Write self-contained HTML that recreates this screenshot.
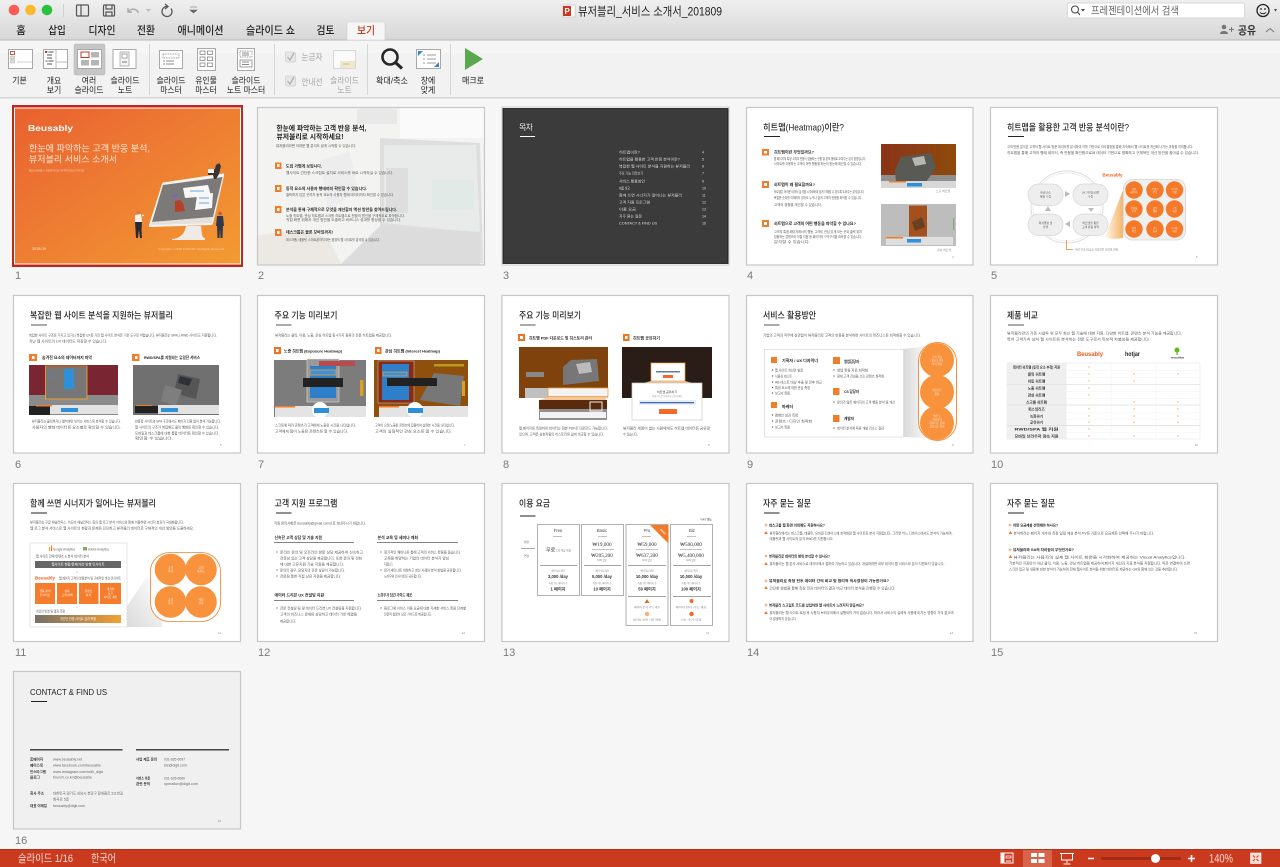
<!DOCTYPE html>
<html lang="ko"><head><meta charset="utf-8"><title>뷰저블리_서비스 소개서_201809</title>
<style>
html,body{margin:0;padding:0;background:#f6f6f6;width:1280px;height:867px;overflow:hidden}
svg{display:block;position:absolute;left:0;top:0}
text{font-family:"Liberation Sans","Noto Sans CJK KR",sans-serif}
.tab{font-size:11px;fill:#222;text-anchor:middle;font-weight:500}
.rb{font-size:8.500px;fill:#222;text-anchor:middle}
.dis{fill:#a5a5a5}
.n{font-size:11px;fill:#7a7a7a}
.T{font-size:9px;fill:#222;font-weight:500}
.h{font-size:3.800px;fill:#222;font-weight:700}
.s{font-size:3.200px;fill:#555}
.w{font-size:3.200px;fill:#fff;text-anchor:middle}
.p{font-size:2.800px;fill:#888}
.m{font-size:3.500px;fill:#f47b2d;text-anchor:middle}
.c{font-size:3.600px;fill:#333;text-anchor:middle}
.v{font-family:"Liberation Serif","Noto Sans CJK KR",serif;font-size:5.200px;fill:#333;text-anchor:middle}
.ic{fill:#fff;stroke:#a8a8a8;stroke-width:1}
.sl{fill:#fff;stroke:#c6c6c6;stroke-width:1.200}
</style></head><body>
<svg width="1280" height="867" viewBox="0 0 1280 867" xmlns="http://www.w3.org/2000/svg">
<defs>
<linearGradient id="top" x1="0" y1="0" x2="0" y2="1"><stop offset="0" stop-color="#efefef"/><stop offset="1" stop-color="#d7d7d7"/></linearGradient>
<linearGradient id="or" x1="0" y1="0" x2="1" y2="1"><stop offset="0" stop-color="#e9612f"/><stop offset="1" stop-color="#f39b33"/></linearGradient>
<linearGradient id="wd" x1="0" y1="0" x2="1" y2="0"><stop offset="0" stop-color="#fff6ea"/><stop offset="1" stop-color="#f4b56a"/></linearGradient>
<linearGradient id="gw" x1="0" y1="1" x2="1" y2="0"><stop offset="0" stop-color="#d8d8d8"/><stop offset="1" stop-color="#fff"/></linearGradient>
<linearGradient id="sh" x1="0" y1="0" x2="1" y2="0"><stop offset="0" stop-color="#d8d8d8"/><stop offset="1" stop-color="#fbfbfb"/></linearGradient>
<linearGradient id="gb" x1="0" y1="0" x2="1" y2="0"><stop offset="0" stop-color="#76706a"/><stop offset="1" stop-color="#f5a030"/></linearGradient>
<linearGradient id="hm" x1="0" y1="0" x2="1" y2="0"><stop offset="0" stop-color="#8a3414"/><stop offset="1" stop-color="#8f4a10"/></linearGradient>
<filter id="bl" filterUnits="userSpaceOnUse" x="0" y="99" width="1280" height="750"><feGaussianBlur stdDeviation="0.3"/></filter>
<filter id="bl2" filterUnits="userSpaceOnUse" x="0" y="0" width="1280" height="99"><feGaussianBlur stdDeviation="0.22"/></filter>
</defs>

<!-- chrome -->
<rect width="1280" height="40" fill="url(#top)"/>
<rect y="39.500" width="1280" height="1" fill="#b8b8b8"/>
<rect y="40.500" width="1280" height="13" fill="#f5f5f5"/>
<rect y="53" width="1280" height="44" fill="#f2f2f2"/>
<rect y="97" width="1280" height="1.500" fill="#d6d6d6"/>
<rect y="98.500" width="1280" height="751" fill="#f6f6f6"/>
<g filter="url(#bl2)">
<circle cx="14" cy="10" r="5.300" fill="#fb5a55"/><circle cx="30.500" cy="10" r="5.300" fill="#fdb92d"/><circle cx="47" cy="10" r="5.300" fill="#2cc23f"/>
<rect x="63" y="4" width="1" height="13" fill="#d0d0d0"/>
<g fill="none" stroke="#555" stroke-width="1.200"><rect x="76.500" y="5" width="12" height="11" rx="1"/><path d="M81 5v11"/><rect x="103.500" y="5" width="11" height="11" rx="1"/><path d="M106 5v4h6V5M106 16v-4h6v4"/></g>
<g fill="none" stroke="#aaa" stroke-width="1.400"><path d="M128 8v4h4M128.500 12c2-4 8-4 10 1"/></g>
<path d="M146 9h5l-2.500 3z" fill="#bbb"/>
<g fill="none" stroke="#555" stroke-width="1.300"><path d="M167 6.500a5 5 0 1 0 4 2"/><path d="M165 4l3 2.500-3 2.500"/></g>
<path d="M190 7h7M190 10h7l-3.500 3z" fill="#666" stroke="#666" stroke-width=".6"/>

<text class="tab" x="21" y="34" textLength="9.500" lengthAdjust="spacingAndGlyphs">홈</text><text class="tab" x="57" y="34" textLength="17.500" lengthAdjust="spacingAndGlyphs">삽입</text><text class="tab" x="102" y="34" textLength="27" lengthAdjust="spacingAndGlyphs">디자인</text><text class="tab" x="146" y="34" textLength="18" lengthAdjust="spacingAndGlyphs">전환</text><text class="tab" x="200.500" y="34" textLength="46" lengthAdjust="spacingAndGlyphs">애니메이션</text><text class="tab" x="270.500" y="34" textLength="49" lengthAdjust="spacingAndGlyphs">슬라이드 쇼</text><text class="tab" x="325.500" y="34" textLength="18" lengthAdjust="spacingAndGlyphs">검토</text>
<path d="M347 40V23a1 1 0 0 1 1-1h36a1 1 0 0 1 1 1v17z" fill="#f6f6f6" stroke="#cfcfcf" stroke-width=".6"/>
<text class="tab" x="366" y="34" textLength="18" lengthAdjust="spacingAndGlyphs" style="fill:#c43e1c">보기</text>

<!-- title -->
<rect x="563" y="5" width="12" height="12" fill="#fff" stroke="#bbb" stroke-width=".6"/><rect x="563" y="6" width="8" height="10" fill="#c9391f"/><text x="564.500" y="14" font-size="8" fill="#fff" font-weight="700">P</text>
<text x="578" y="15.500" font-size="12" fill="#222" textLength="144" lengthAdjust="spacingAndGlyphs">뷰저블리_서비스 소개서_201809</text>
<rect x="1067.500" y="3" width="177" height="15" rx="2" fill="#fff" stroke="#d0d0d0" stroke-width=".7"/>
<circle cx="1075" cy="9.500" r="3.500" fill="none" stroke="#444" stroke-width="1"/><path d="M1077.500 12l2.500 3" stroke="#444" stroke-width="1"/><path d="M1081 9h4l-2 2.500z" fill="#444"/>
<text x="1091" y="14" font-size="10.500" fill="#666" textLength="88" lengthAdjust="spacingAndGlyphs">프레젠테이션에서 검색</text>
<circle cx="1263" cy="10.500" r="6" fill="none" stroke="#222" stroke-width="1.300"/><circle cx="1261" cy="9" r=".9" fill="#222"/><circle cx="1265" cy="9" r=".9" fill="#222"/><path d="M1260 12.500q3 2.500 6 0" fill="none" stroke="#222"/><path d="M1274 9h3l-1.500 2.500z" fill="#444"/>
<circle cx="1224" cy="27" r="2.300" fill="#777"/><path d="M1220 34c0-4 8-4 8 0z" fill="#777"/><path d="M1229 29.500h5M1231.500 27v5" stroke="#777" stroke-width="1"/>
<text x="1238" y="34" font-size="11" font-weight="700" fill="#333" textLength="18" lengthAdjust="spacingAndGlyphs">공유</text>
<path d="M1266 32l4-3.500 4 3.500" fill="none" stroke="#777" stroke-width="1"/>

<!-- ribbon icons -->
<rect class="ic" x="8.500" y="49.500" width="24" height="19"/><rect x="10.500" y="51.500" width="4" height="3" fill="#fff" stroke="#c0392b" stroke-width=".8"/><rect x="10.500" y="56" width="4" height="3" fill="#ddd" stroke="#aaa" stroke-width=".5"/><rect x="10.500" y="60" width="4" height="3" fill="#ddd" stroke="#aaa" stroke-width=".5"/><path d="M17 62h15" stroke="#ccc"/>
<rect class="ic" x="43.500" y="49.500" width="24" height="19"/><path d="M56 50v18M56 62h11" stroke="#bbb"/><path d="M45.500 52h2M48.500 52h5M47 55h5M47 58h5M45.500 61h2M48.500 61h5M47 64h5" stroke="#555" stroke-width=".9"/><rect x="45" y="51" width="2" height="2" fill="#c0392b"/>
<rect x="74" y="44" width="31" height="31" rx="2" fill="#c6c6c6" stroke="#b5b5b5" stroke-width=".5"/>
<rect class="ic" x="77.500" y="49.500" width="24" height="19"/><rect x="81" y="52" width="8" height="5.500" fill="#fff" stroke="#c0392b"/><rect x="91" y="52" width="8" height="5.500" fill="#b5b5b5"/><rect x="81" y="60" width="8" height="5.500" fill="#b5b5b5"/><rect x="91" y="60" width="8" height="5.500" fill="#b5b5b5"/>
<rect class="ic" x="113" y="49.500" width="23" height="19"/><rect x="120" y="52" width="9" height="14" fill="#f4f4f4" stroke="#999" stroke-width=".7"/><rect x="122" y="54" width="5" height="4" fill="#fff" stroke="#888" stroke-width=".7"/><path d="M122 62h5" stroke="#777"/>
<rect class="ic" x="159.500" y="50.500" width="23" height="18"/><rect x="163" y="54" width="16" height="4" fill="none" stroke="#777" stroke-width=".7" stroke-dasharray="1 .7"/><path d="M163 61h2M166 61h8M163 64h2M166 64h8" stroke="#666" stroke-width=".8"/>
<rect class="ic" x="197.500" y="48.500" width="18" height="22"/><g fill="none" stroke="#777" stroke-width=".7"><rect x="200" y="51" width="5" height="3.500"/><rect x="207.500" y="51" width="5" height="3.500"/><rect x="200" y="57" width="5" height="3.500"/><rect x="207.500" y="57" width="5" height="3.500"/><rect x="200" y="63" width="5" height="3.500"/><rect x="207.500" y="63" width="5" height="3.500"/></g>
<rect class="ic" x="237.500" y="48.500" width="17" height="22"/><g fill="none" stroke="#777" stroke-width=".7"><rect x="240" y="51" width="12" height="6" stroke-dasharray="1 .7"/><rect x="240" y="60" width="12" height="7"/></g><path d="M242 53h7M242 55h7M242 62h7M242 64.500h7" stroke="#666" stroke-width=".7"/>
<rect x="285.500" y="52" width="10" height="10" rx="1.500" fill="#e6e6e6" stroke="#d0d0d0" stroke-width=".7"/><path d="M287.500 57l2.500 3 4-7" fill="none" stroke="#b0b0b0" stroke-width="1.300"/>
<rect x="285.500" y="76" width="10" height="10" rx="1.500" fill="#e6e6e6" stroke="#d0d0d0" stroke-width=".7"/><path d="M287.500 81l2.500 3 4-7" fill="none" stroke="#b0b0b0" stroke-width="1.300"/>
<rect x="333.500" y="50.500" width="22" height="18" fill="#fafafa" stroke="#d8d8d8"/><rect x="340" y="61" width="15" height="7" fill="#f2e8c8"/><path d="M343 64h6" stroke="#bbb"/>
<circle cx="390" cy="57" r="7.500" fill="none" stroke="#262626" stroke-width="2.600"/><path d="M395.500 62.500l6.500 6" stroke="#262626" stroke-width="3.200"/>
<rect class="ic" x="416.500" y="49.500" width="24" height="19"/><path d="M423 55h2M427 55h9M423 59h2M427 59h9M423 63h2M427 63h9" stroke="#777" stroke-width=".8"/><path d="M418 51l5 0-5 5zM439 67h-5l5-5z" fill="#3b84c4"/>
<path d="M465 48v22l18-11z" fill="#5aa94f"/>
<g fill="#d6d6d6"><rect x="149" y="44" width="1" height="51"/><rect x="274" y="44" width="1" height="51"/><rect x="367" y="44" width="1" height="51"/><rect x="450" y="44" width="1" height="51"/></g>
<g>
<text class="rb" x="19.500" y="83.500" textLength="14.500" lengthAdjust="spacingAndGlyphs">기본</text>
<text class="rb" x="54" y="83.500" textLength="14.500" lengthAdjust="spacingAndGlyphs">개요</text><text class="rb" x="54" y="93" textLength="14.500" lengthAdjust="spacingAndGlyphs">보기</text>
<text class="rb" x="89" y="83.500" textLength="14.500" lengthAdjust="spacingAndGlyphs">여러</text><text class="rb" x="89" y="93" textLength="29" lengthAdjust="spacingAndGlyphs">슬라이드</text>
<text class="rb" x="125" y="83.500" textLength="29" lengthAdjust="spacingAndGlyphs">슬라이드</text><text class="rb" x="125" y="93" textLength="14.500" lengthAdjust="spacingAndGlyphs">노트</text>
<text class="rb" x="171" y="83.500" textLength="29" lengthAdjust="spacingAndGlyphs">슬라이드</text><text class="rb" x="171" y="93" textLength="21.500" lengthAdjust="spacingAndGlyphs">마스터</text>
<text class="rb" x="206" y="83.500" textLength="21.500" lengthAdjust="spacingAndGlyphs">유인물</text><text class="rb" x="206" y="93" textLength="21.500" lengthAdjust="spacingAndGlyphs">마스터</text>
<text class="rb" x="246" y="83.500" textLength="29" lengthAdjust="spacingAndGlyphs">슬라이드</text><text class="rb" x="246" y="93" textLength="38.500" lengthAdjust="spacingAndGlyphs">노트 마스터</text>
<text class="rb dis" x="312" y="60" textLength="21" lengthAdjust="spacingAndGlyphs">눈금자</text><text class="rb dis" x="312" y="85" textLength="21" lengthAdjust="spacingAndGlyphs">안내선</text>
<text class="rb dis" x="344.500" y="83.500" textLength="29" lengthAdjust="spacingAndGlyphs">슬라이드</text><text class="rb dis" x="344.500" y="93" textLength="14.500" lengthAdjust="spacingAndGlyphs">노트</text>
<text class="rb" x="392" y="83.500" textLength="32" lengthAdjust="spacingAndGlyphs">확대/축소</text>
<text class="rb" x="428" y="83.500" textLength="14.500" lengthAdjust="spacingAndGlyphs">창에</text><text class="rb" x="428" y="93" textLength="14.500" lengthAdjust="spacingAndGlyphs">맞게</text>
<text class="rb" x="473" y="83.500" textLength="22" lengthAdjust="spacingAndGlyphs">매크로</text>
</g>
</g>

<g filter="url(#bl)">
<!-- numbers -->
<g class="nn"><text class="n" x="15" y="279">1</text><text class="n" x="258" y="279">2</text><text class="n" x="503" y="279">3</text><text class="n" x="747" y="279">4</text><text class="n" x="991" y="279">5</text>
<text class="n" x="15" y="468">6</text><text class="n" x="258" y="468">7</text><text class="n" x="503" y="468">8</text><text class="n" x="747" y="468">9</text><text class="n" x="991" y="468">10</text>
<text class="n" x="15" y="656">11</text><text class="n" x="258" y="656">12</text><text class="n" x="503" y="656">13</text><text class="n" x="747" y="656">14</text><text class="n" x="991" y="656">15</text>
<text class="n" x="15" y="844">16</text></g>

<!-- slide 1 -->
<rect x="12" y="105" width="231" height="162" fill="#c1271b"/><rect x="14" y="107.500" width="227" height="157" fill="#fff"/><rect x="15" y="108.500" width="225" height="155" fill="url(#or)"/>
<text x="28" y="131" font-size="8.500" font-weight="700" fill="#fff" textLength="45" lengthAdjust="spacingAndGlyphs">Beusably</text>
<text x="29" y="151.500" font-size="9" fill="#fde7d6" textLength="121" lengthAdjust="spacingAndGlyphs">한눈에 파악하는 고객 반응 분석,</text>
<text x="29" y="162.500" font-size="9" fill="#fde7d6" textLength="88" lengthAdjust="spacingAndGlyphs">뷰저블리 서비스 소개서</text>
<text x="29" y="171.500" font-size="2.800" fill="#fbd0b0" textLength="55" lengthAdjust="spacingAndGlyphs">BEUSABLY SERVICE INTRODUCTION</text>
<text x="32" y="250" font-size="3.800" fill="#fde7d6">2018.09</text>
<text x="158" y="250" font-size="2.600" fill="#fbd5a8" textLength="67" lengthAdjust="spacingAndGlyphs">Copyright © 2018 FLIPORT. All Rights Reserved.</text>
<!-- monitor -->
<path d="M186 226h15l1 9q1 3 3 3v2h-33v-1q12-1 14-13z" fill="#efeae6"/>
<path d="M163 182.500l60-9q1.500 0 1 2l-11 48q-.5 1.500-2 1.500l-61 2q-1.500 0-1-2l13-41q.5-1.500 1-1.500z" fill="#f5f3f0"/>
<path d="M163 185l59.500-8-9.500 40-61 5z" fill="#7c7a78"/>
<path d="M152 222l61-5-1.500 6-61 2z" fill="#e4e0dc"/>
<path d="M183 188l25-3 3 11-26 2z" fill="#f7f7f7"/><path d="M197 195l16-2-1 15-17 2z" fill="#f7f7f7"/>
<path d="M190 191h14M199 198h10M199 203h10" stroke="#6fa6d8" stroke-width="1"/>
<path d="M175 201l5-1 3 3 2 8-10 1z" fill="#b8402a"/>
<path d="M172 196l5-2 1 2-5 2zM202 182l5-1 0 1-5 1z" fill="#7f5fc0"/>
<path d="M208 171l7-2 1-4 3-2 2 3-2 8-3 5h-2l-1-4-5 0z" fill="#3a3333"/><circle cx="216" cy="163" r="1.400" fill="#d98055"/><rect x="208" y="169" width="6" height="4" fill="#f3f3f3"/>
<path d="M135 222l7 0-.5 8 .5 8h-2l-1-8-1 8h-2l-.5-8z" fill="#2c2c30"/><path d="M135 215l6-1 1 8h-7z" fill="#f6f2ee"/><circle cx="138.500" cy="212.500" r="1.600" fill="#cf7a50"/><path d="M142 216l2-1" stroke="#f6f2ee"/>
<path d="M217 216l6 0 1 10h-1l-.5 12h-2l-.5-9-.5 9h-2l-.5-12h-1z" fill="#30394a"/><circle cx="220" cy="213.500" r="1.800" fill="#b85f3c"/>

<!-- slide 2 -->
<rect x="258" y="108" width="226" height="157" fill="#f3f3f2"/>
<rect x="400" y="108" width="84" height="30" fill="#fafafa"/><rect x="357" y="109" width="40" height="15" fill="#e8e8e8"/>
<path d="M380 138l100 5 3 120-60 2-43-35z" fill="#dedede"/><path d="M384 145h92l4 88-96-10z" fill="#e9eaea"/><rect x="386" y="168" width="22" height="45" fill="#dedede"/><rect x="432" y="180" width="42" height="30" fill="#e2eae7"/>
<path d="M380 226l100 6v33H340z" fill="#dcdcdc"/><path d="M258 235l40-5 30 8 14 27H258z" fill="#ece8e3"/>
<path d="M320 160l30-8 8 40-30 18z" fill="#ededed"/>
<text x="276.500" y="130.500" font-size="7" font-weight="700" fill="#222" textLength="90" lengthAdjust="spacingAndGlyphs">한눈에 파악하는 고객 반응 분석,</text>
<text x="276.500" y="139" font-size="7" font-weight="700" fill="#222" textLength="67" lengthAdjust="spacingAndGlyphs">뷰저블리로 시작하세요!</text>
<text class="s" x="276" y="147" textLength="80" lengthAdjust="spacingAndGlyphs">뷰저블리라면 어려운 웹 분석도 쉽게 시작할 수 있습니다.</text>
<g fill="#f07d2c"><rect x="275" y="162.500" width="6.500" height="6.500"/><rect x="275" y="185" width="6.500" height="7"/><rect x="275" y="206" width="6.500" height="7"/><rect x="275" y="229" width="6.500" height="7"/></g>
<g fill="#fff"><rect x="277" y="164" width="2.500" height="3"/><rect x="277" y="187" width="2.500" height="3"/><rect x="277" y="208" width="2.500" height="3"/><rect x="277" y="231" width="2.500" height="3"/></g>
<text class="h" x="286" y="167.300" textLength="36" lengthAdjust="spacingAndGlyphs">도입 가볍게 보입니다.</text>
<text class="s" x="286" y="174" textLength="107" lengthAdjust="spacingAndGlyphs">웹사이트 간단한 스크립트 설치로 서비스를 바로 시작하실 수 있습니다.</text>
<text class="h" x="286" y="189.800" textLength="81" lengthAdjust="spacingAndGlyphs">동적 요소의 사용자 행태까지 확인할 수 있습니다.</text>
<text class="s" x="286" y="196" textLength="108" lengthAdjust="spacingAndGlyphs">클릭하지 않은 곳까지 동적 요소의 사용자 행태 데이터까지 확인할 수 있습니다.</text>
<text class="h" x="286" y="210.800" textLength="111" lengthAdjust="spacingAndGlyphs">분석을 통해 구체적으로 무엇을 개선할지 액션 방안을 찾아드립니다.</text>
<text class="s" x="286" y="217" textLength="119" lengthAdjust="spacingAndGlyphs">노출 히트맵, 관심 히트맵과 스크롤 히트맵으로 전환의 원인을 구체적으로 파악합니다.</text>
<text class="s" x="286" y="221" textLength="115" lengthAdjust="spacingAndGlyphs">직접 화면 위에서 개선 방안을 도출하고 비즈니스 성과를 향상할 수 있습니다.</text>
<text class="h" x="286" y="233.300" textLength="47" lengthAdjust="spacingAndGlyphs">데스크톱은 물론 모바일까지!</text>
<text class="s" x="286" y="241" textLength="94" lengthAdjust="spacingAndGlyphs">데스크톱, 태블릿, 스마트폰까지 모든 환경의 웹 사이트를 분석할 수 있습니다.</text>
<rect x="257.500" y="107.500" width="227" height="157.500" fill="none" stroke="#c6c6c6" stroke-width="1.200"/>

<!-- slide 3 -->
<rect x="502" y="107" width="227" height="158" fill="#fff" stroke="#ccc"/><rect x="503" y="108.500" width="225" height="155" fill="#3a3a3a" stroke="#151515" stroke-width=".8"/>
<text x="519" y="130" font-size="8" fill="#eee" textLength="14">목차</text><rect x="520" y="136" width="15" height="1" fill="#fff"/>
<g font-size="3.600" fill="#ddd">
<text x="619" y="153.300" textLength="21" lengthAdjust="spacingAndGlyphs">히트맵이란?</text><text x="702" y="153.300">4</text>
<text x="619" y="160.300" textLength="61" lengthAdjust="spacingAndGlyphs">히트맵을 활용한 고객 반응 분석이란?</text><text x="702" y="160.300">5</text>
<text x="619" y="167.300" textLength="71" lengthAdjust="spacingAndGlyphs">복잡한 웹 사이트 분석을 지원하는 뷰저블리</text><text x="702" y="167.300">6</text>
<text x="619" y="174.300" textLength="24" lengthAdjust="spacingAndGlyphs">주요 기능 미리보기</text><text x="702" y="174.300">7</text>
<text x="619" y="182.300" textLength="26" lengthAdjust="spacingAndGlyphs">서비스 활용방안</text><text x="702" y="182.300">9</text>
<text x="619" y="189.300" textLength="11" lengthAdjust="spacingAndGlyphs">제품 비교</text><text x="702" y="189.300">10</text>
<text x="619" y="196.300" textLength="63" lengthAdjust="spacingAndGlyphs">함께 쓰면 시너지가 일어나는 뷰저블리</text><text x="702" y="196.300">11</text>
<text x="619" y="203.300" textLength="31" lengthAdjust="spacingAndGlyphs">고객 지원 프로그램</text><text x="702" y="203.300">12</text>
<text x="619" y="210.300" textLength="17" lengthAdjust="spacingAndGlyphs">이용 요금</text><text x="702" y="210.300">13</text>
<text x="619" y="217.300" textLength="23" lengthAdjust="spacingAndGlyphs">자주 묻는 질문</text><text x="702" y="217.300">14</text>
<text x="619" y="224.300" textLength="38" lengthAdjust="spacingAndGlyphs">CONTACT &amp; FIND US</text><text x="702" y="224.300">16</text>
</g>

<!-- slide 4 -->
<rect class="sl" x="746.500" y="107.500" width="226.500" height="157.500"/>
<text class="T" x="763" y="130.300" textLength="81" lengthAdjust="spacingAndGlyphs">히트맵(Heatmap)이란?</text><rect x="764" y="136" width="16" height="1" fill="#222"/>
<g fill="#f07d2c"><rect x="762" y="149" width="7" height="6.500"/><rect x="762" y="181" width="7" height="7"/><rect x="762" y="220" width="7" height="7"/></g>
<g fill="#fff"><rect x="764" y="151" width="3" height="2.500"/><rect x="764" y="183" width="3" height="3"/><rect x="764" y="222" width="3" height="3"/></g>
<text class="h" x="774" y="153.300" textLength="40" lengthAdjust="spacingAndGlyphs">히트맵이란 무엇일까요?</text>
<text class="s" x="774" y="160" textLength="92" lengthAdjust="spacingAndGlyphs">웹 페이지의 특정 고객의 반응이 집중되는 곳을 열 분포 형태로 보여주는 분석 방법입니다.</text>
<text class="s" x="774" y="165" textLength="88" lengthAdjust="spacingAndGlyphs">사이트를 이용하는 고객이 어떤 행동을 하는지 한눈에 확인할 수 있습니다.</text>
<text class="h" x="774" y="185.800" textLength="41" lengthAdjust="spacingAndGlyphs">히트맵이 왜 필요할까요?</text>
<text class="s" x="774" y="193" textLength="90" lengthAdjust="spacingAndGlyphs">히트맵은 어려운 데이터 분석을 시각화하여 쉽게 이해할 수 있도록 도와주는 분석입니다</text>
<text class="s" x="774" y="199" textLength="88" lengthAdjust="spacingAndGlyphs">복잡한 숫자를 이해하지 않아도 누구나 쉽게 고객의 반응을 파악할 수 있습니다.</text>
<text class="s" x="774" y="206" textLength="48" lengthAdjust="spacingAndGlyphs">고객의 경험을 개선할 수 있습니다.</text>
<text class="h" x="774" y="224.800" textLength="82" lengthAdjust="spacingAndGlyphs">히트맵으로 고객의 어떤 행동을 파악할 수 있나요?</text>
<text class="s" x="774" y="233" textLength="88" lengthAdjust="spacingAndGlyphs">고객의 특정 페이지에서의 행동, 고객이 관심 있게 보는 곳과 클릭 위치</text>
<text class="s" x="774" y="238" textLength="88" lengthAdjust="spacingAndGlyphs">집중하는 콘텐츠와 이탈 지점 등 페이지의 구석구석을 파악할 수 있습니다.</text>
<text class="s" x="774" y="243" textLength="36" lengthAdjust="spacingAndGlyphs">분석할 수 있습니다.</text>
<rect x="881" y="144" width="75" height="44" fill="#8f8f8f"/><rect x="881" y="144" width="75" height="31" fill="url(#hm)"/>
<path d="M895 170l6-13 30-4 5 15-10 14-30 1z" fill="#5a5a55"/><path d="M912 158l12-2 2 8-11 2z" fill="#b8b8b0"/>
<rect x="881" y="181" width="75" height="7" fill="#d8d8d8"/><rect x="907" y="183" width="15" height="3.500" fill="#2f8fdb"/><rect x="889" y="181" width="17" height="1.500" fill="#f07d2c"/>
<text class="p" x="936" y="192" textLength="14" lengthAdjust="spacingAndGlyphs">노출 히트맵</text>
<rect x="881" y="204" width="75" height="42" fill="#bdbdbd"/><rect x="909" y="205.500" width="18" height="31" fill="#a5501a"/><path d="M912 222l10-5 3 10-10 4z" fill="#6a4020"/>
<rect x="886" y="237" width="67" height="8" fill="#dedede"/><rect x="907" y="239" width="14" height="3.500" fill="#2f8fdb"/><rect x="886" y="237" width="17" height="1.500" fill="#f07d2c"/><rect x="953" y="218" width="1.200" height="12" fill="#7cb35a"/>
<text class="p" x="937" y="251" textLength="14" lengthAdjust="spacingAndGlyphs">관심 히트맵</text><text class="p" x="952" y="258">4</text>

<!-- slide 5 -->
<rect class="sl" x="990.500" y="107.500" width="227" height="157.500"/>
<text class="T" x="1007" y="130.300" textLength="122" lengthAdjust="spacingAndGlyphs">히트맵을 활용한 고객 반응 분석이란?</text><rect x="1008" y="136" width="16" height="1" fill="#222"/>
<text class="s" x="1007" y="148" textLength="186" lengthAdjust="spacingAndGlyphs">고객 반응 분석은 고객의 웹 사이트 방문 데이터를 분석하여 이를 기반으로 의사결정을 통해 지속해서 웹 사이트를 개선해 나가는 과정을 의미합니다.</text>
<text class="s" x="1007" y="154" textLength="192" lengthAdjust="spacingAndGlyphs">히트맵을 통해 고객의 행태 데이터, 즉 반응을 확인함으로써 데이터 기반으로 명확하고 구체적인 개선 방안을 찾아낼 수 있습니다.</text>
<circle cx="1067" cy="207" r="36" fill="#fff" stroke="#ddd" stroke-width="1"/><circle cx="1067" cy="207" r="34" fill="none" stroke="#eee" stroke-width="1"/>
<g fill="#eee" stroke="#d6d6d6" stroke-width=".7"><rect x="1028" y="184" width="35" height="21.500" rx="10.500"/><rect x="1073" y="184" width="35" height="21.500" rx="10.500"/><rect x="1028" y="214" width="35" height="21.500" rx="10.500"/><rect x="1073" y="214" width="35" height="21.500" rx="10.500"/></g>
<g fill="#bbb"><path d="M1065 191v6l5-3zM1045 211h6l-3-5zM1088 208h6l-3 4zM1070 221v6l-5-3z"/></g>
<g fill="#555" font-size="2.800" text-anchor="middle"><text x="1045.500" y="193.500">비즈니스</text><text x="1045.500" y="197.500">목표 수립</text><text x="1090.500" y="193.500">UX 가이드라인</text><text x="1090.500" y="197.500">수립</text><text x="1045.500" y="224">의사결정 및</text><text x="1045.500" y="228">실행</text><text x="1090.500" y="224">히트맵을 통한</text><text x="1090.500" y="228">고객 반응 파악</text></g>
<path d="M1123 190l-18 47q8 3 18 1z" fill="url(#wd)"/>
<text x="1102.500" y="176.500" font-size="4.400" font-weight="700" fill="#f2621f" textLength="20" lengthAdjust="spacingAndGlyphs">Beusably</text>
<rect x="1123.500" y="179.500" width="62" height="60.500" rx="9" fill="#efefef" stroke="#dcdcdc"/>
<g fill="#f47a2b"><circle cx="1134" cy="190" r="8.700"/><circle cx="1155" cy="190" r="8.700"/><circle cx="1174.500" cy="190" r="8.700"/><circle cx="1134" cy="209" r="8.700"/><circle cx="1155" cy="209" r="8.700"/><circle cx="1174.500" cy="209" r="8.700"/><circle cx="1134" cy="229" r="8.700"/><circle cx="1155" cy="229" r="8.700"/><circle cx="1174.500" cy="229" r="8.700"/></g>
<g class="cw" font-size="2.500" fill="#ffe0c6" text-anchor="middle"><text x="1134" y="190">유입</text><text x="1134" y="193">페이지</text><text x="1155" y="190">콘텐츠</text><text x="1155" y="193">분석</text><text x="1174.500" y="190">사이트</text><text x="1174.500" y="193">이탈</text><text x="1134" y="209">전환율</text><text x="1134" y="212">분석</text><text x="1155" y="209">클릭</text><text x="1155" y="212">패턴</text><text x="1174.500" y="209">구조</text><text x="1174.500" y="212">개선</text><text x="1134" y="229">레이</text><text x="1134" y="232">아웃</text><text x="1155" y="229">광고</text><text x="1155" y="232">효과</text><text x="1174.500" y="229">디자인</text><text x="1174.500" y="232">개선</text></g>
<path d="M1066.500 240v9.500h6.500" fill="none" stroke="#ee8a2a" stroke-width=".8"/>
<text class="p" x="1075" y="250.500" textLength="43" lengthAdjust="spacingAndGlyphs">개선 전후 비교로 지속적인 최적화 반복</text><text class="p" x="1196" y="258">5</text>

<!-- slide 6 -->
<rect class="sl" x="13.500" y="295.500" width="227" height="157.500"/>
<text class="T" x="30" y="318.300" textLength="143" lengthAdjust="spacingAndGlyphs">복잡한 웹 사이트 분석을 지원하는 뷰저블리</text><rect x="31" y="324.500" width="16" height="1" fill="#555"/>
<text class="s" x="29" y="336.300" textLength="188" lengthAdjust="spacingAndGlyphs">복잡한 사이트 구조를 가지고 있거나 복잡한 UX를 가진 웹 사이트 분석은 기존 도구로 어렵습니다. 뷰저블리는 SPA나 RWD 사이트도 지원합니다.</text>
<text class="s" x="29" y="342.300" textLength="78" lengthAdjust="spacingAndGlyphs">지난 웹 사이트의 UX 데이터도 저장할 수 있습니다.</text>
<rect x="29" y="354" width="8" height="7" fill="#f07d2c"/><rect x="132" y="354" width="7.500" height="7" fill="#f07d2c"/><rect x="32" y="356" width="2.500" height="3" fill="#fff"/><rect x="135" y="356" width="2.500" height="3" fill="#fff"/>
<text class="h" x="42" y="358.800" textLength="50" lengthAdjust="spacingAndGlyphs">숨겨진 요소의 데이터까지 파악</text>
<text class="h" x="144" y="359" textLength="56" lengthAdjust="spacingAndGlyphs">RWD/SPA를 지원하는 유일한 서비스</text>
<rect x="29" y="365" width="89" height="50" fill="#8b8b8b"/><rect x="29" y="365" width="89" height="30" fill="#7a2630"/><rect x="46" y="367" width="41" height="32" fill="#777"/>
<rect x="45.500" y="366" width="41.500" height="33" fill="none" stroke="#f0a02a" stroke-width=".9"/><rect x="64" y="369" width="10" height="20" fill="#2f8fdb"/><rect x="50" y="376" width="3" height="1" fill="#2f8fdb"/>
<rect x="46" y="405" width="72" height="9" fill="#e2e2e2"/><rect x="29" y="406" width="21" height="9" fill="#222"/><rect x="61" y="408" width="17" height="4" fill="#2f8fdb"/><rect x="36" y="405" width="16" height="1.500" fill="#f07d2c"/>
<rect x="133" y="365" width="86" height="50" fill="#6f6f6f"/><path d="M178 374l22 5-4 20-22-6z" fill="#555"/><path d="M180 376l12 3-3 7-11-3z" fill="#2d3038"/><path d="M165 385l17 5-6 16-15-5z" fill="#7e7e7e"/>
<rect x="158" y="405" width="61" height="9" fill="#e2e2e2"/><rect x="135" y="406" width="23" height="7" fill="#222"/><rect x="161" y="408" width="17" height="4" fill="#2f8fdb"/><rect x="136" y="405" width="16" height="1" fill="#f07d2c"/>
<text class="s" x="32" y="422.700" textLength="89" lengthAdjust="spacingAndGlyphs">뷰저블리는 클릭하거나 펼쳐야만 보이는 서비스를 분석할 수 있습니다.</text>
<text class="s" x="32" y="428.300" textLength="89" lengthAdjust="spacingAndGlyphs">사용자의 행태 데이터를 요소별로 확인할 수 있습니다.</text>
<text class="s" x="135" y="422.700" textLength="86" lengthAdjust="spacingAndGlyphs">반응형 사이트와 SPA 구조에서도 페이지 전환 없이 분석 가능합니다.</text>
<text class="s" x="135" y="428.700" textLength="84" lengthAdjust="spacingAndGlyphs">웹 사이트의 구조가 복잡해도 클릭 행태를 확인할 수 있습니다.</text>
<text class="s" x="135" y="434.300" textLength="84" lengthAdjust="spacingAndGlyphs">모바일과 데스크톱에 대한 통합 데이터를 확인할 수 있습니다.</text>
<text class="s" x="135" y="439.300" textLength="38" lengthAdjust="spacingAndGlyphs">확인할 수 있습니다.</text><text class="p" x="220" y="446">6</text>

<!-- slide 7 -->
<rect class="sl" x="257.500" y="295.500" width="227" height="157.500"/>
<text class="T" x="274.500" y="318.300" textLength="63" lengthAdjust="spacingAndGlyphs">주요 기능 미리보기</text><rect x="276" y="324.500" width="15.500" height="1" fill="#555"/>
<text class="s" x="275" y="336.300" textLength="117" lengthAdjust="spacingAndGlyphs">뷰저블리는 클릭, 이동, 노출, 관심 히트맵 등 4가지 종류의 전문 히트맵을 제공합니다.</text>
<rect x="274" y="347" width="7" height="7" fill="#ee7420"/><rect x="375" y="347" width="6.500" height="7" fill="#ee7420"/><rect x="276" y="349" width="2.500" height="3" fill="#fff"/><rect x="377" y="349" width="2.500" height="3" fill="#fff"/>
<text class="h" x="284" y="352.300" textLength="58" lengthAdjust="spacingAndGlyphs">노출 히트맵 (Exposure Heatmap)</text>
<text class="h" x="385" y="352.300" textLength="55" lengthAdjust="spacingAndGlyphs">관심 히트맵 (Interest Heatmap)</text>
<rect x="274" y="360" width="92" height="57" fill="#7c7c7c"/><rect x="307" y="359" width="32" height="43" fill="#999" stroke="#ddd" stroke-width=".6"/><rect x="310" y="366" width="26" height="32" fill="#2f7fca"/><rect x="319" y="361" width="36" height="5" fill="#b84c4c"/>
<rect x="310" y="370" width="26" height="5" fill="#3c90dc" stroke="#f0a02a" stroke-width=".8"/>
<rect x="303" y="378" width="40" height="9" fill="#222"/><rect x="275" y="406" width="91" height="11" fill="#e4e4e4"/><rect x="275" y="406" width="20" height="1.500" fill="#f07d2c"/><circle cx="320" cy="410" r="8" fill="#fff"/><rect x="314" y="408" width="15" height="5" fill="#2f8fdb"/><rect x="360" y="380" width="3.500" height="16" fill="#d9a020"/>
<rect x="374" y="360" width="94" height="57" fill="#8f5010"/><rect x="378" y="361" width="36" height="42" fill="#8a2a14" stroke="#ccc" stroke-width=".5"/><rect x="382" y="364" width="27" height="36" fill="#2f7fca"/><rect x="383" y="372" width="24" height="4" fill="#3c90dc" stroke="#f0a02a" stroke-width=".7"/>
<path d="M420 400l14-27 30 3-4 30z" fill="#777"/><rect x="387" y="378" width="50" height="8" fill="#222"/><rect x="434" y="364" width="30" height="2.500" fill="#b89a20"/>
<rect x="379" y="406" width="89" height="11" fill="#e4e4e4"/><rect x="379" y="406" width="20" height="1.500" fill="#f07d2c"/><circle cx="415" cy="410" r="8" fill="#fff"/><rect x="408" y="408" width="15" height="5" fill="#2f8fdb"/><rect x="462" y="381" width="3" height="15" fill="#d9a020"/>
<text class="s" x="275" y="426.300" textLength="81" lengthAdjust="spacingAndGlyphs">스크롤에 따라 콘텐츠가 고객에게 노출된 시간을 나타냅니다.</text>
<text class="s" x="275" y="432.300" textLength="73" lengthAdjust="spacingAndGlyphs">고객에게 많이 노출된 콘텐츠를 알 수 있습니다.</text>
<text class="s" x="375" y="426.300" textLength="80" lengthAdjust="spacingAndGlyphs">고객이 오래 노출된 콘텐츠에 집중하여 살펴본 시간을 나타냅니다.</text>
<text class="s" x="375" y="432.300" textLength="77" lengthAdjust="spacingAndGlyphs">고객의 실질적인 관심 요소를 알 수 있습니다.</text><text class="p" x="464" y="446">7</text>

<!-- slide 8 -->
<rect class="sl" x="502" y="295.500" width="227" height="157.500"/>
<text class="T" x="519" y="318.300" textLength="62" lengthAdjust="spacingAndGlyphs">주요 기능 미리보기</text><rect x="520" y="324.500" width="15.500" height="1" fill="#555"/>
<rect x="518" y="334" width="7" height="7" fill="#ee7420"/><rect x="623" y="334" width="6.500" height="7" fill="#ee7420"/><rect x="520" y="336" width="3" height="3" fill="#fff"/><rect x="625" y="336" width="2.500" height="3" fill="#fff"/>
<text class="h" x="529" y="339.300" textLength="63" lengthAdjust="spacingAndGlyphs">히트맵 PDF 다운로드 및 히스토리 관리</text>
<text class="h" x="633" y="339.300" textLength="27" lengthAdjust="spacingAndGlyphs">히트맵 공유하기</text>
<rect x="519" y="347" width="89" height="51" fill="#7f4310"/><path d="M563 367l8-7 26-1 2 22-36 4z" fill="#777"/><path d="M576 364l14-2 2 10-13 2z" fill="#bbb"/><rect x="526" y="372" width="18" height="5" fill="#888"/>
<rect x="525" y="388" width="83" height="10" fill="#c0c0c0"/><rect x="548" y="388" width="60" height="8.500" fill="#f4f4f4" stroke="#f0a040" stroke-width=".8"/>
<path d="M540 400l8-3h60l-3 3z" fill="#f4c89a"/>
<rect x="539" y="400" width="68" height="20" fill="#8f8f8f"/><rect x="539" y="400" width="68" height="9" fill="#5a2c10"/><rect x="540" y="412" width="66" height="6" fill="#f2f2f2"/><rect x="590" y="402" width="12" height="9" fill="none" stroke="#f0f0f0"/>
<rect x="622" y="347" width="90" height="51" fill="#2a1e12"/><rect x="651" y="363" width="34" height="18" fill="#fff" stroke="#f0a040" stroke-width=".7"/><rect x="656" y="371" width="24" height="1.500" fill="#5b7bb0"/><rect x="663" y="375" width="10" height="3" fill="#f4692a"/>
<path d="M640 384l11-3h34l11 3z" fill="#f0c08c"/>
<rect x="632" y="383" width="70" height="37" fill="#fff" stroke="#c8c8c8" stroke-width=".7"/><rect x="639" y="400" width="57" height="5" fill="#e8eef8"/><rect x="640" y="402" width="54" height="1.300" fill="#3f6ab5"/><rect x="659" y="409" width="18" height="5" fill="#f4692a"/>
<text x="667" y="393" font-size="3" fill="#444" text-anchor="middle">히트맵 공유하기</text><text x="667" y="397" font-size="2.200" fill="#999" text-anchor="middle">아래 링크를 복사하여 공유하세요</text>
<text class="s" x="519" y="429.300" textLength="89" lengthAdjust="spacingAndGlyphs">웹 페이지를 측정하며 데이터는 원본 PDF로 다운로드 가능합니다.</text>
<text class="s" x="519" y="435.300" textLength="85" lengthAdjust="spacingAndGlyphs">있으며, 고객은 상호작용의 히스토리를 쉽게 비교할 수 있습니다.</text>
<text class="s" x="623" y="429.300" textLength="87" lengthAdjust="spacingAndGlyphs">뷰저블리 계정이 없는 사람에게도 히트맵 데이터를 공유할</text>
<text class="s" x="623" y="435.300" textLength="15" lengthAdjust="spacingAndGlyphs">수 있습니다.</text><text class="p" x="708" y="446">8</text>

<!-- slide 9 -->
<rect class="sl" x="746.500" y="295.500" width="226.500" height="157.500"/>
<text class="T" x="763" y="318.300" textLength="53" lengthAdjust="spacingAndGlyphs">서비스 활용방안</text><rect x="764" y="324.500" width="15.500" height="1" fill="#555"/>
<text class="s" x="763" y="336.300" textLength="158" lengthAdjust="spacingAndGlyphs">기업의 고객과 직무에 상관없이 뷰저블리로 고객의 반응을 분석하면 사이트의 비즈니스를 최적화할 수 있습니다.</text>
<path d="M903 349l25-3v92l-25-1z" fill="url(#sh)"/>
<rect x="764.500" y="349.500" width="139" height="87.500" fill="#fff" stroke="#ddd" stroke-width=".8"/>
<g fill="#f07d2c"><rect x="771" y="357" width="6" height="6"/><rect x="771" y="402" width="6" height="6"/><rect x="833" y="357" width="7" height="7"/><rect x="833" y="388" width="6.500" height="7"/><rect x="833" y="415" width="6.500" height="7"/></g>
<text class="h" x="782" y="361.800" textLength="36" lengthAdjust="spacingAndGlyphs">기획자 / UX 디자이너</text>
<text class="h" x="782" y="407.800" textLength="11" lengthAdjust="spacingAndGlyphs">마케터</text>
<text class="h" x="844" y="362.800" textLength="15" lengthAdjust="spacingAndGlyphs">영업담당자</text>
<text class="h" x="844" y="392.800" textLength="15" lengthAdjust="spacingAndGlyphs">CS 담당자</text>
<text class="h" x="844" y="419.800" textLength="10" lengthAdjust="spacingAndGlyphs">개발자</text>
<g fill="#333"><circle cx="772.500" cy="370" r=".6"/><circle cx="772.500" cy="376" r=".6"/><circle cx="772.500" cy="382" r=".6"/><circle cx="772.500" cy="387.500" r=".6"/><circle cx="772.500" cy="393" r=".6"/><circle cx="772.500" cy="415" r=".6"/><circle cx="772.500" cy="421" r=".6"/><circle cx="772.500" cy="427" r=".6"/><circle cx="834" cy="370" r=".6"/><circle cx="834" cy="376" r=".6"/><circle cx="834" cy="402" r=".6"/><circle cx="834" cy="428" r=".6"/></g>
<g class="zz">
<text class="s" x="775" y="371.300" textLength="28" lengthAdjust="spacingAndGlyphs">웹 사이트 개선안 발굴</text><text class="s" x="775" y="377.300" textLength="17" lengthAdjust="spacingAndGlyphs">사용성 테스트</text><text class="s" x="775" y="383.300" textLength="47" lengthAdjust="spacingAndGlyphs">AB 테스트 대상 추출 및 전후 비교</text><text class="s" x="775" y="388.800" textLength="35" lengthAdjust="spacingAndGlyphs">특정 요소에 대한 관심 측정</text><text class="s" x="775" y="394.300" textLength="15" lengthAdjust="spacingAndGlyphs">보고서 활용</text>
<text class="s" x="775" y="416.300" textLength="23" lengthAdjust="spacingAndGlyphs">캠페인 성과 측정</text><text class="s" x="775" y="422.300" textLength="37" lengthAdjust="spacingAndGlyphs">콘텐츠 / 디자인 최적화</text><text class="s" x="775" y="428.300" textLength="15" lengthAdjust="spacingAndGlyphs">보고서 활용</text>
<text class="s" x="837" y="371.300" textLength="31" lengthAdjust="spacingAndGlyphs">영업 활동 자료 최적화</text><text class="s" x="837" y="377.300" textLength="47" lengthAdjust="spacingAndGlyphs">잠재 고객 관심을 끄는 콘텐츠 최적화</text>
<text class="s" x="837" y="403.300" textLength="58" lengthAdjust="spacingAndGlyphs">문의가 많은 페이지의 고객 행동 분석 및 개선</text>
<text class="s" x="837" y="429.300" textLength="47" lengthAdjust="spacingAndGlyphs">데이터 분석에 따른 개발 리소스 절감</text></g>
<rect x="918.500" y="342.500" width="38" height="98" rx="19" fill="#fff" stroke="#f79039" stroke-width="1"/>
<g fill="#f8923c"><circle cx="937" cy="360" r="17"/><circle cx="937" cy="392" r="17"/><circle cx="937" cy="423" r="17"/></g>
<g font-size="2.600" fill="#ffe6d2" text-anchor="middle"><text x="937" y="358">고객 행동</text><text x="937" y="361.500">데이터 기반</text><text x="937" y="365">의사 결정</text><text x="937" y="391">비즈니스</text><text x="937" y="395">향상</text><text x="937" y="417">배우고</text><text x="937" y="420.500">측정하며</text><text x="937" y="424">데이터로 함께</text><text x="937" y="427.500">성장하는 문화</text></g>
<text class="p" x="952" y="446">9</text>

<!-- slide 10 -->
<rect class="sl" x="990.500" y="295.500" width="227" height="157.500"/>
<text class="T" x="1007" y="318.300" textLength="31" lengthAdjust="spacingAndGlyphs">제품 비교</text><rect x="1008" y="324.500" width="16" height="1" fill="#555"/>
<text class="s" x="1007" y="334.500" textLength="175" lengthAdjust="spacingAndGlyphs">뷰저블리만의 기존 시냅투 위 모두 최신 웹 기술에 대한 지원, 다양한 히트맵, 콘텐츠 분석 기능을 제공합니다.</text>
<text class="s" x="1007" y="340.300" textLength="143" lengthAdjust="spacingAndGlyphs">특히 고객가치 상처 웹 사이트를 분석하는 전문 도구로서 독보적 차별성을 제공합니다.</text>
<text x="1077" y="356" font-size="6" font-weight="700" fill="#ee5a20" textLength="26" lengthAdjust="spacingAndGlyphs">Beusably</text>
<text x="1125" y="356" font-size="6" font-weight="700" fill="#222" textLength="15" lengthAdjust="spacingAndGlyphs">hotjar</text>
<circle cx="1177" cy="350" r="2.500" fill="#5dbb1f"/><rect x="1176.500" y="352" width="1.300" height="3" fill="#5dbb1f"/><text x="1171" y="358.500" font-size="2.800" font-weight="700" fill="#333" textLength="13" lengthAdjust="spacingAndGlyphs">mouseflow</text>
<rect x="1007" y="363" width="193" height="76" fill="#fff" stroke="#e4e4e4" stroke-width=".6"/><rect x="1007" y="363" width="59.500" height="76" fill="#efefef"/>
<g stroke="#f2f2f2" stroke-width=".6"><path d="M1066 370.500h134M1066 377.500h134M1066 391.500h134M1066 398.500h134M1066 412.500h134M1066 419.500h134M1066 432.500h134M1111 363v76M1156 363v76"/></g>
<g stroke="#dcdcdc" stroke-width=".7"><path d="M1007 384.300h193M1007 405h193M1007 425.500h193"/></g>
<g class="c" font-size="3.400" font-weight="700" fill="#444" text-anchor="middle">
<text x="1036.500" y="368.300" textLength="47" lengthAdjust="spacingAndGlyphs">데이터 히트맵 (동적 요소 추적) 지원</text><text x="1036.500" y="375.300">클릭 히트맵</text><text x="1036.500" y="382.300">이동 히트맵</text><text x="1036.500" y="389.300">노출 히트맵</text><text x="1036.500" y="396.300">관심 히트맵</text><text x="1036.500" y="403.300">스크롤 히트맵</text><text x="1036.500" y="410.300">퍼스널리즈</text><text x="1036.500" y="417.300">녹화하기</text><text x="1036.500" y="423.300">공유하기</text><text x="1036.500" y="430.300" textLength="44" lengthAdjust="spacingAndGlyphs">RWD/SPA 웹 지원</text><text x="1036.500" y="437.300" textLength="44" lengthAdjust="spacingAndGlyphs">모바일 브라우저 접속 지원</text></g>
<g class="mk"><text class="m" x="1089" y="368">×</text>
<text class="m" x="1089" y="375">×</text><text class="m" x="1134" y="375">×</text><text class="m" x="1178" y="375">×</text>
<text class="m" x="1089" y="382">×</text><text class="m" x="1134" y="382">×</text>
<text class="m" x="1089" y="389">×</text><text class="m" x="1089" y="396">×</text>
<text class="m" x="1134" y="403">×</text><text class="m" x="1178" y="403">×</text>
<text class="m" x="1089" y="410">×</text><text class="m" x="1134" y="410">×</text><text class="m" x="1178" y="410">×</text>
<text class="m" x="1089" y="417">×</text><text class="m" x="1134" y="417">×</text><text class="m" x="1178" y="417">×</text>
<text class="m" x="1089" y="423.500">×</text><text class="m" x="1134" y="423.500">×</text><text class="m" x="1178" y="423.500">×</text>
<text class="m" x="1089" y="430">×</text>
<text class="m" x="1089" y="437">×</text><text class="m" x="1134" y="437">×</text><text class="m" x="1178" y="437">×</text></g>
<text class="p" x="1195" y="446">10</text>

<!-- slide 11 -->
<rect class="sl" x="13.500" y="483.500" width="227" height="158"/>
<text class="T" x="30" y="506.300" textLength="126" lengthAdjust="spacingAndGlyphs">함께 쓰면 시너지가 일어나는 뷰저블리</text><rect x="31" y="512.500" width="16" height="1" fill="#222"/>
<text class="s" x="30" y="523.300" textLength="154" lengthAdjust="spacingAndGlyphs">뷰저블리는 구글 애널리틱스, 어도비 애널리틱스 등의 웹 로그 분석 서비스와 함께 이용하면 시너지 효과가 극대화됩니다.</text>
<text class="s" x="30" y="529.300" textLength="164" lengthAdjust="spacingAndGlyphs">웹 로그 분석 서비스로 웹 사이트의 현황과 문제를 진단하고 뷰저블리 데이터로 구체적인 개선 방안을 도출하세요.</text>
<path d="M121 615l27-40 14 45v7H121z" fill="url(#gw)"/>
<rect x="30" y="543" width="97" height="84" fill="#fff" stroke="#dedede" stroke-width=".8"/>
<rect x="49" y="547" width="1.200" height="4" fill="#f4a020"/><rect x="51" y="545.500" width="1.200" height="5.500" fill="#f08020"/><text x="53" y="550.500" font-size="3.300" fill="#666" textLength="22" lengthAdjust="spacingAndGlyphs">Google Analytics</text>
<rect x="83" y="547" width="4" height="3.500" fill="#7fae5a"/><text x="88" y="550.500" font-size="3.300" fill="#666" textLength="21" lengthAdjust="spacingAndGlyphs">Adobe Analytics</text>
<text class="s" x="36" y="557.300" textLength="53" lengthAdjust="spacingAndGlyphs">웹 사이트 전략/컨텐츠 &amp; 분석 데이터 분석</text>
<rect x="35" y="561" width="86" height="7" fill="#666"/><text class="w" x="78" y="565.500" textLength="53" lengthAdjust="spacingAndGlyphs">웹사이트 현황/문제/개선 방향 인사이트</text>
<text x="77" y="573.500" font-size="3.500" fill="#f07d2c" text-anchor="middle">+</text>
<text x="35" y="579.500" font-size="4.400" font-weight="700" fill="#ee5a20" textLength="20" lengthAdjust="spacingAndGlyphs">Beusably</text>
<text class="s" x="59" y="579.500" textLength="62" lengthAdjust="spacingAndGlyphs">웹 페이지 고객의 반응분석 및 구체적인 개선 인사이트</text>
<g fill="#f47b2a"><rect x="35" y="583" width="20" height="21"/><rect x="57" y="583" width="20" height="21"/><rect x="79" y="583" width="19.500" height="21"/><rect x="100" y="583" width="21" height="21"/></g>
<g class="w2" font-size="2.800" fill="#fff" text-anchor="middle"><text x="45" y="592">행동 분석</text><text x="45" y="596">인사이트</text><text x="67" y="592">심층</text><text x="67" y="596">고객 이해</text><text x="88.500" y="592">콘텐츠</text><text x="88.500" y="596">분석</text><text x="110.500" y="590">개선안</text><text x="110.500" y="594">도출</text><text x="110.500" y="598">사이트 개선</text></g>
<text x="77" y="609" font-size="3.500" fill="#f07d2c" text-anchor="middle">+</text>
<text class="s" x="36" y="612.300" textLength="29" lengthAdjust="spacingAndGlyphs">개선안 반영 및 결과 측정</text>
<rect x="35" y="615" width="86" height="8" fill="url(#gb)"/><text class="w" x="78" y="620" textLength="36" lengthAdjust="spacingAndGlyphs">개선안 반영 사이트 성과 측정</text>
<rect x="150.500" y="552.500" width="70" height="69" rx="19" fill="#fff" stroke="#ef8230" stroke-width=".8"/>
<g fill="#f8923c"><circle cx="170.500" cy="569.500" r="15.800"/><circle cx="201" cy="569.500" r="15.800"/><circle cx="170.500" cy="602" r="15.800"/><circle cx="201" cy="602" r="15.800"/></g>
<g font-size="2.700" fill="#ffe6d2" text-anchor="middle"><text x="170.500" y="568.500">고객</text><text x="170.500" y="572">확대</text><text x="201" y="568.500">고객</text><text x="201" y="572">충성도</text><text x="170.500" y="600.500">고객</text><text x="170.500" y="604">유지</text><text x="201" y="600.500">매출</text><text x="201" y="604">향상</text></g>
<text class="p" x="218" y="634">11</text>

<!-- slide 12 -->
<rect class="sl" x="257.500" y="483.500" width="227" height="158"/>
<text class="T" x="274.500" y="506.300" textLength="63" lengthAdjust="spacingAndGlyphs">고객 지원 프로그램</text><rect x="276" y="512.500" width="15.500" height="1" fill="#222"/>
<text class="s" x="274" y="524.300" textLength="92" lengthAdjust="spacingAndGlyphs">지원 문의사항은 beusably@gmail.com으로 보내주시기 바랍니다.</text>
<text class="h" x="274.500" y="539" textLength="47.500" lengthAdjust="spacingAndGlyphs">신속한 고객 상담 및 기술 지원</text><rect x="274" y="542" width="80" height=".8" fill="#666"/>
<text class="h" x="377.500" y="539" textLength="40.500" lengthAdjust="spacingAndGlyphs">분석 교육 및 세미나 개최</text><rect x="377" y="542" width="81" height=".8" fill="#666"/>
<text class="h" x="274.500" y="596.500" textLength="49.500" lengthAdjust="spacingAndGlyphs">데이터 드리븐 UX 컨설팅 지원</text><rect x="274" y="600" width="80" height=".8" fill="#666"/>
<text class="h" x="377.500" y="596.500" textLength="34.500" lengthAdjust="spacingAndGlyphs">노하우가 담긴 가이드 제공</text><rect x="377" y="600" width="81" height=".8" fill="#666"/>
<g fill="#444"><circle cx="277" cy="552" r=".6"/><circle cx="277" cy="570" r=".6"/><circle cx="277" cy="576" r=".6"/><circle cx="381" cy="552" r=".6"/><circle cx="381" cy="570" r=".6"/><circle cx="277" cy="608" r=".6"/><circle cx="381" cy="608" r=".6"/></g>
<text class="s" x="280" y="553.300" textLength="83" lengthAdjust="spacingAndGlyphs">온라인 문의 및 오프라인 방문 상담 제공하여 신속하고</text>
<text class="s" x="280" y="559.300" textLength="82" lengthAdjust="spacingAndGlyphs">전문성 있는 고객 상담을 제공합니다. 또한 문의 및 전화</text>
<text class="s" x="280" y="565.300" textLength="64" lengthAdjust="spacingAndGlyphs">에 대한 고유지원 기술 지원을 제공합니다.</text>
<text class="s" x="280" y="571.300" textLength="65" lengthAdjust="spacingAndGlyphs">문의의 경우, 담당자의 전문 상담이 가능합니다.</text>
<text class="s" x="280" y="577.300" textLength="61" lengthAdjust="spacingAndGlyphs">전문점 통한 직접 상담 지원을 제공합니다.</text>
<text class="s" x="384" y="553.300" textLength="77" lengthAdjust="spacingAndGlyphs">정기적인 웨비나를 통해 고객의 서비스 활용을 돕습니다.</text>
<text class="s" x="384" y="559.300" textLength="65" lengthAdjust="spacingAndGlyphs">교육을 희망하는 기업의 데이터 분석가 양성</text>
<text class="s" x="384" y="565.300" textLength="9" lengthAdjust="spacingAndGlyphs">지원합니다.</text>
<text class="s" x="384" y="571.300" textLength="77" lengthAdjust="spacingAndGlyphs">정기 세미나를 개최하고 최신 사례와 분석 방법을 공유합니다</text>
<text class="s" x="384" y="577.300" textLength="38" lengthAdjust="spacingAndGlyphs">노하우와 인사이트를 공유합니다.</text>
<text class="s" x="280" y="609.300" textLength="82" lengthAdjust="spacingAndGlyphs">전문 컨설팅 팀 및 데이터 드리븐 UX 컨설팅을 지원합니다.</text>
<text class="s" x="280" y="615.300" textLength="77" lengthAdjust="spacingAndGlyphs">고객의 비즈니스 문제를 상담하고 데이터 기반 해결을</text>
<text class="s" x="280" y="622.300" textLength="16" lengthAdjust="spacingAndGlyphs">제공합니다.</text>
<text class="s" x="384" y="609.300" textLength="82" lengthAdjust="spacingAndGlyphs">블로그에 서비스 이용 요금에 대한 자세한 서비스 활용 단계별</text>
<text class="s" x="384" y="615.300" textLength="48" lengthAdjust="spacingAndGlyphs">전문적 설명이 담긴 가이드를 제공합니다.</text>
<text class="p" x="462" y="634">12</text>

<!-- slide 13 -->
<rect class="sl" x="502" y="483.500" width="227" height="158"/>
<text class="T" x="519" y="506.300" textLength="31" lengthAdjust="spacingAndGlyphs">이용 요금</text><rect x="520" y="515.500" width="15.500" height="1" fill="#222"/>
<text class="p" x="700" y="520.500" textLength="12" lengthAdjust="spacingAndGlyphs" style="fill:#333">*VAT 별도</text>
<text class="p" x="524" y="543" style="fill:#555">월간</text><rect x="521" y="548" width="14" height=".7" fill="#888"/><text class="p" x="524" y="557" style="fill:#555">연간</text>
<g fill="#fff" stroke="#a8a8a8" stroke-width=".9"><rect x="537.500" y="524.500" width="42" height="71"/><rect x="581.500" y="524.500" width="42" height="71"/><rect x="626" y="524.500" width="42" height="101"/><rect x="670.500" y="524.500" width="42" height="101"/></g>
<path d="M650 525h18.500v18.500z" fill="#f47a2a"/><text x="660" y="530" font-size="2.600" fill="#fff" font-weight="700" transform="rotate(45 660 530)">BEST</text>
<g fill="#999"><rect x="553" y="536" width="9" height=".6"/><rect x="598" y="536" width="9" height=".6"/><rect x="642" y="536" width="9" height=".6"/><rect x="687" y="536" width="9" height=".6"/><rect x="540" y="565" width="37" height=".9"/><rect x="584" y="565" width="37" height=".9"/><rect x="628" y="565" width="38" height=".9"/><rect x="673" y="565" width="38" height=".9"/><rect x="592" y="549" width="22" height=".6"/><rect x="636" y="549" width="22" height=".6"/><rect x="680" y="549" width="22" height=".6"/><rect x="628" y="596" width="38" height=".9"/><rect x="673" y="596" width="38" height=".9"/></g>
<g font-size="4.200" fill="#444" text-anchor="middle"><text x="558" y="532">Free</text><text x="602" y="532">Basic</text><text x="647" y="532">Pro</text><text x="692" y="532">Biz</text></g>
<text x="546" y="551.500" font-size="5" fill="#333">무료</text><text class="p" x="556" y="551.500" textLength="15" lengthAdjust="spacingAndGlyphs">1개 계정 제공</text>
<g class="v"><text class="v" x="602" y="546">₩19,000</text><text class="v" x="647" y="546">₩59,000</text><text class="v" x="691" y="546">₩500,000</text><text class="v" x="602" y="556.800">₩205,200</text><text class="v" x="647" y="556.800">₩637,200</text><text class="v" x="691" y="556.800">₩5,400,000</text></g>
<g font-size="2.300" fill="#777" text-anchor="middle"><text x="602" y="561">10% 할인</text><text x="647" y="561">10% 할인</text><text x="691" y="561">10% 할인</text>
<text x="558" y="571.500">페이지뷰 제한</text><text x="602" y="571.500">페이지뷰 제한</text><text x="647" y="571.500">페이지뷰 제한</text><text x="691" y="571.500">페이지뷰 제한</text>
<text x="558" y="583.800">측정 가능 페이지 수</text><text x="602" y="583.800">측정 가능 페이지 수</text><text x="647" y="583.800">측정 가능 페이지 수</text><text x="691" y="583.800">측정 가능 페이지 수</text>
<text x="647" y="608" textLength="26" lengthAdjust="spacingAndGlyphs">레이어 분석 기능 제공</text><text x="691" y="608" textLength="31" lengthAdjust="spacingAndGlyphs">페이지 관리 기능 제공</text><text x="647" y="620.500" textLength="28" lengthAdjust="spacingAndGlyphs">데이터 보관 기간 연장</text><text x="691" y="620.500" textLength="21" lengthAdjust="spacingAndGlyphs">기능 추가 요청</text></g>
<g font-family="Liberation Serif" font-size="4.200" fill="#333" font-weight="700" text-anchor="middle"><text x="558" y="577.800">3,000 /day</text><text x="602" y="577.800">5,000 /day</text><text x="647" y="577.800">10,000 /day</text><text x="691" y="577.800">10,000 /day</text><text x="558" y="590.300">1 페이지</text><text x="602" y="590.300">10 페이지</text><text x="647" y="590.300">50 페이지</text><text x="691" y="590.300">100 페이지</text></g>
<path d="M647 599l2.500 4h-5z" fill="#ee6a25"/><circle cx="691.500" cy="601" r="2" fill="#ee6a25"/><circle cx="647" cy="614" r="2.200" fill="#f4b080"/><circle cx="691.500" cy="614" r="2.200" fill="#ee6a25"/>
<text class="p" x="706" y="634">13</text>

<!-- slide 14 -->
<rect class="sl" x="746.500" y="483.500" width="226.500" height="158"/>
<text class="T" x="763" y="506.300" textLength="48" lengthAdjust="spacingAndGlyphs">자주 묻는 질문</text><rect x="764" y="512.500" width="15.500" height="1" fill="#222"/>
<g fill="#f6b587"><circle cx="766" cy="525" r="1.400"/><circle cx="766" cy="556" r="1.400"/><circle cx="766" cy="581" r="1.400"/><circle cx="766" cy="605" r="1.400"/></g>
<g fill="#f07020"><path d="M766 531l1.800 3h-3.600zM766 562l1.800 3h-3.600zM766 586l1.800 3h-3.600zM766 611l1.800 3h-3.600z"/></g>
<text class="h" x="769" y="526.300" textLength="56" lengthAdjust="spacingAndGlyphs" style="font-size:3.300px">데스크톱 웹 화면 이외에도 지원하나요?</text>
<text class="s" x="769.500" y="534.300" textLength="183" lengthAdjust="spacingAndGlyphs">뷰저블리에서는 데스크톱, 태블릿, 모바일 디바이스에 최적화된 웹 사이트를 분석 지원합니다. 그러면 어느 디바이스에서도 분석이 가능하며,</text>
<text class="s" x="769.500" y="540" textLength="64" lengthAdjust="spacingAndGlyphs">태블릿과 웹 사이트의 분석 RWD를 지원합니다.</text>
<text class="h" x="769" y="557.300" textLength="61" lengthAdjust="spacingAndGlyphs" style="font-size:3.300px">뷰저블리로 데이터의 범위 분석할 수 있나요?</text>
<text class="s" x="769.500" y="565" textLength="175" lengthAdjust="spacingAndGlyphs">뷰저블리는 웹 분석 서비스로 데이터에서 접하여 가능하고 있습니다. 개설하려면 내부 데이터 웹 서비스와 분석 지원하지 않습니다.</text>
<text class="h" x="769" y="582" textLength="120" lengthAdjust="spacingAndGlyphs" style="font-size:3.300px">뷰저블리로 측정 전후 데이터 간의 비교 및 합리적 의사결정이 가능한가요?</text>
<text class="s" x="769.500" y="589.300" textLength="126" lengthAdjust="spacingAndGlyphs">간단한 방법을 통해 측정 전과 데이터의 결과 비교 데이터 분석을 진행할 수 있습니다.</text>
<text class="h" x="769" y="606.300" textLength="95" lengthAdjust="spacingAndGlyphs" style="font-size:3.300px">뷰저블리 스크립트 코드를 삽입하면 웹 사이트가 느려지지 않을까요?</text>
<text class="s" x="769.500" y="614" textLength="184" lengthAdjust="spacingAndGlyphs">뷰저블리는 웹 사이트 로딩 후 사용자 브라우저에서 실행되어 거의 없습니다. 따라서 서비스의 실제적 사용에 미치는 영향이 거의 없으며</text>
<text class="s" x="769.500" y="620" textLength="27" lengthAdjust="spacingAndGlyphs">이 발생하지 않습니다.</text>
<text class="p" x="950" y="634">14</text>

<!-- slide 15 -->
<rect class="sl" x="990.500" y="483.500" width="227" height="158"/>
<text class="T" x="1007" y="506.300" textLength="48" lengthAdjust="spacingAndGlyphs">자주 묻는 질문</text><rect x="1008" y="512.500" width="16" height="1" fill="#222"/>
<g fill="#f6b587"><circle cx="1010" cy="525" r="1.400"/><circle cx="1010" cy="549.600" r="1.400"/></g>
<g fill="#f07020"><path d="M1010.500 531l1.800 3h-3.600zM1010.500 555l1.800 3h-3.600z"/></g>
<text class="h" x="1013" y="526.300" textLength="45" lengthAdjust="spacingAndGlyphs" style="font-size:3.300px">어떤 요금제를 선택해야 하나요?</text>
<text class="s" x="1013.500" y="534.300" textLength="140.500" lengthAdjust="spacingAndGlyphs">분석하려는 페이지 개수와 측정 일일 예상 분석 PV를 기준으로 요금제를 선택해 주시기 바랍니다.</text>
<text class="h" x="1013" y="550.900" textLength="61" lengthAdjust="spacingAndGlyphs" style="font-size:3.300px">뷰저블리와 GA의 차이점이 무엇인가요?</text>
<text class="s" x="1013.500" y="558.300" textLength="172.500" lengthAdjust="spacingAndGlyphs">뷰저블리는 사용자의 실제 웹 사이트 화면을 시각화하여 제공하는 Visual Analytics입니다.</text>
<text class="s" x="1009" y="564.300" textLength="181" lengthAdjust="spacingAndGlyphs">기본적인 지표만이 아닌 클릭, 이동, 노출, 관심 히트맵을 제공하여 페이지 개선과 지표 분석을 지원합니다. 따로 연결하여 쓰면</text>
<text class="s" x="1009" y="570.300" textLength="169" lengthAdjust="spacingAndGlyphs">스크린 접근 및 내용에 대한 분석이 가능하며 전체 웹사이트 분석을 위한 데이터를 제공하는 GA와 함께 쓰는 것을 추천합니다.</text>
<text class="p" x="1194" y="634">15</text>

<!-- slide 16 -->
<rect x="13.500" y="671.500" width="227" height="157.500" fill="#f0f0f0" stroke="#c6c6c6" stroke-width="1.200"/>
<text x="30" y="695" font-size="8.500" font-weight="500" fill="#1c1c1c" textLength="77" lengthAdjust="spacingAndGlyphs">CONTACT &amp; FIND US</text><rect x="31" y="701" width="16" height="1" fill="#222"/>
<rect x="30" y="749" width="92.500" height="1.500" fill="#444"/><rect x="136" y="749" width="93" height="1.500" fill="#444"/>
<g font-size="3.200" font-weight="700" fill="#333"><text x="30" y="760.300" textLength="13" lengthAdjust="spacingAndGlyphs">홈페이지</text><text x="30" y="766.300" textLength="13" lengthAdjust="spacingAndGlyphs">페이스북</text><text x="30" y="772.900" textLength="16" lengthAdjust="spacingAndGlyphs">인스타그램</text><text x="30" y="778.300" textLength="10" lengthAdjust="spacingAndGlyphs">블로그</text><text x="30" y="794.300" textLength="14" lengthAdjust="spacingAndGlyphs">회사 주소</text><text x="30" y="806.900" textLength="17" lengthAdjust="spacingAndGlyphs">대표 이메일</text><text x="136" y="760.300" textLength="21" lengthAdjust="spacingAndGlyphs">사업 제휴 문의</text><text x="136" y="779.300" textLength="14" lengthAdjust="spacingAndGlyphs">서비스 이용</text><text x="136" y="784.900" textLength="14" lengthAdjust="spacingAndGlyphs">관련 문의</text></g>
<g font-size="3.200" fill="#666"><text x="53" y="760.300" textLength="29" lengthAdjust="spacingAndGlyphs">www.beusably.net</text><text x="53" y="766.300" textLength="48" lengthAdjust="spacingAndGlyphs">www.facebook.com/beusable</text><text x="53" y="772.900" textLength="50" lengthAdjust="spacingAndGlyphs">www.instagram.com/with_digit</text><text x="53" y="778.300" textLength="39" lengthAdjust="spacingAndGlyphs">brunch.co.kr/@beusable</text><text x="53" y="794.300" textLength="70" lengthAdjust="spacingAndGlyphs">대한민국 경기도 성남시 분당구 황새울로 311번길</text><text x="53" y="800.300" textLength="16" lengthAdjust="spacingAndGlyphs">화곡로 5층</text><text x="53" y="806.900" textLength="32" lengthAdjust="spacingAndGlyphs">beusably@digit.com</text><text x="164" y="760.300" textLength="21" lengthAdjust="spacingAndGlyphs">031-625-6097</text><text x="164" y="766.300" textLength="23" lengthAdjust="spacingAndGlyphs">biz@digit.com</text><text x="164" y="779.300" textLength="21" lengthAdjust="spacingAndGlyphs">031-625-6080</text><text x="164" y="784.900" textLength="34" lengthAdjust="spacingAndGlyphs">operation@digit.com</text></g>
<text class="p" x="218" y="822">16</text>
</g>

<!-- status bar -->
<rect y="849" width="1280" height="18" fill="#ca3a1f"/><rect y="849" width="1280" height="1" fill="#b53018"/>
<text x="18" y="862" font-size="11" fill="#f8dcd4" textLength="55" lengthAdjust="spacingAndGlyphs">슬라이드 1/16</text><text x="91" y="862" font-size="11" fill="#f8dcd4" textLength="25" lengthAdjust="spacingAndGlyphs">한국어</text>
<rect x="1023" y="850" width="29" height="17" fill="#d9644c"/>
<rect x="1001" y="853" width="12" height="10" fill="none" stroke="#fff" stroke-width="1"/><rect x="1001" y="853" width="3.500" height="10" fill="#fff"/><path d="M1006 856h5v2h-5z" fill="none" stroke="#fff" stroke-width=".7"/><path d="M1006 861h5" stroke="#fff"/>
<g fill="#fff"><rect x="1031" y="853" width="6" height="4"/><rect x="1038.500" y="853" width="6" height="4"/><rect x="1031" y="859" width="6" height="4"/><rect x="1038.500" y="859" width="6" height="4"/></g>
<rect x="1061.500" y="853.500" width="11" height="6.500" fill="none" stroke="#fff" stroke-width="1"/><path d="M1060 853.500h14M1067 860v3M1063.500 864h7" stroke="#fff" stroke-width="1"/>
<path d="M1088 858.500h6M1188 858.500h7M1191.500 855v7" stroke="#fff" stroke-width="1.600"/>
<rect x="1101" y="857" width="80" height="3" rx="1.500" fill="#a22b15"/><circle cx="1155.500" cy="858.500" r="4.500" fill="#fff"/>
<text x="1209" y="862.500" font-size="12" fill="#f8dcd4" textLength="24" lengthAdjust="spacingAndGlyphs">140%</text>
<rect x="1250.500" y="853" width="10.500" height="10.500" fill="#f8dcd4" stroke="#fff" stroke-width=".6"/><path d="M1253 855.500l2 2M1258.500 855.500l-2 2M1253 861l2-2M1258.500 861l-2-2" stroke="#ca3a1f" stroke-width="1"/>
</svg>
</body></html>
